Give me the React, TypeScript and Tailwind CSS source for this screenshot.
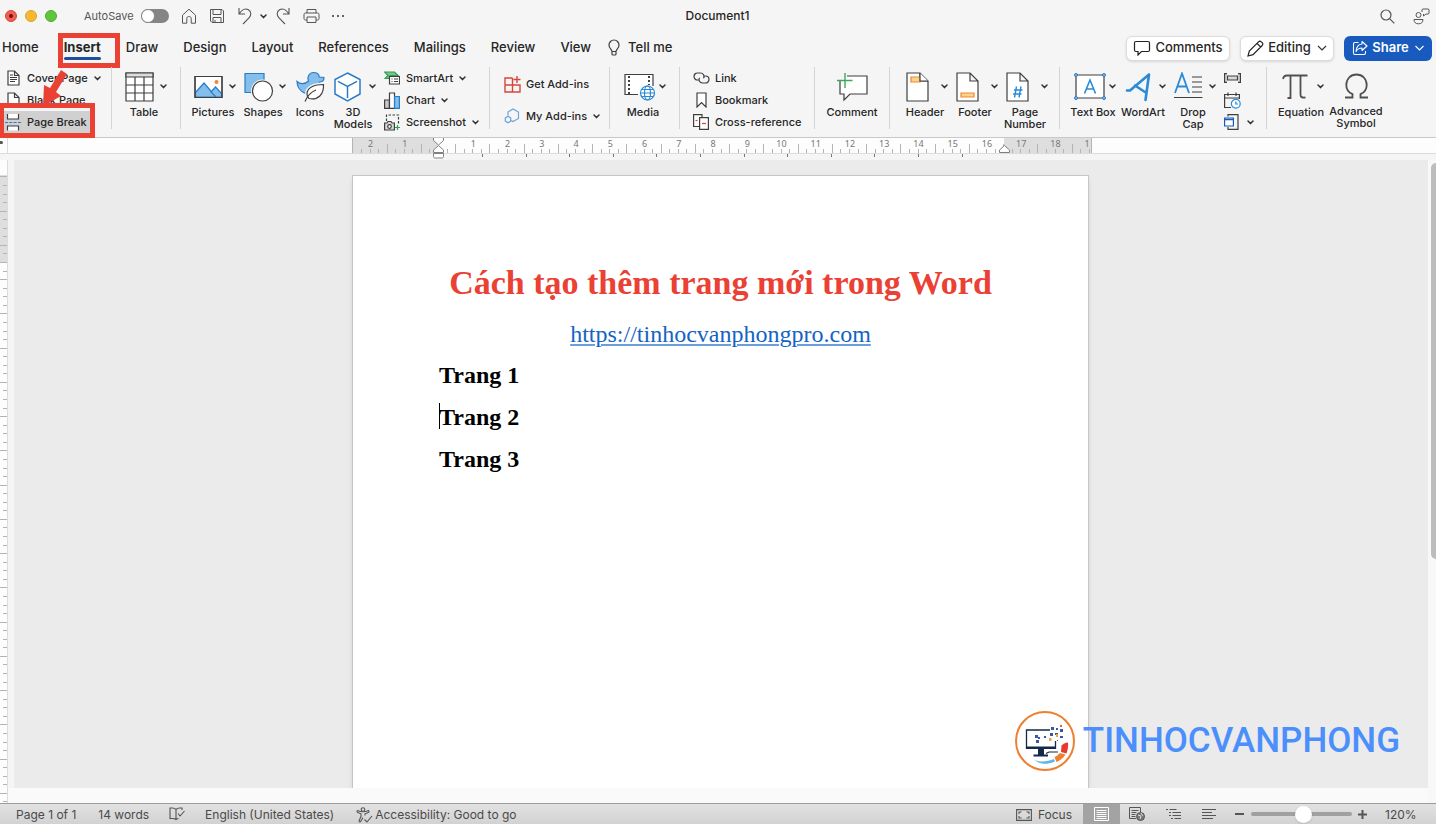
import { useState } from "react";
import type { ReactNode } from "react";

const CM = 34.25;

const Chevron = ({ className = "text-[#333]" }: { className?: string }) => (
  <svg width="7" height="5" viewBox="0 0 7 5" fill="none" stroke="currentColor" strokeWidth="1.5" strokeLinecap="round" strokeLinejoin="round" className={`shrink-0 ${className}`}>
    <path d="M1 1l2.5 2.6L6 1" />
  </svg>
);

type IconProps = { w: number; h: number; children: ReactNode };

const Icon = ({ w, h, children }: IconProps) => (
  <svg width={w} height={h} viewBox={`0 0 ${w} ${h}`} fill="none" stroke="#3f3f3f" strokeWidth="1.2" className="shrink-0">
    {children}
  </svg>
);

type ButtonProps = {
  icon: ReactNode;
  label: string;
  menu?: boolean;
  className?: string;
};

const BigButton = ({ icon, label, menu, className = "w-[42px]" }: ButtonProps) => (
  <button className={`flex shrink-0 flex-col items-center ${className}`}>
    <span className={`flex h-[39px] w-full items-center ${menu ? "justify-between" : "justify-center"}`}>
      {icon}
      {menu && <Chevron />}
    </span>
    <span className={`flex flex-col whitespace-pre text-center text-[11px] font-medium leading-3 ${menu ? "pr-1" : ""}`}>
      {label}
    </span>
  </button>
);

const SmallButton = ({ icon, label, menu, className = "h-[22px]" }: ButtonProps) => (
  <button className={`flex items-center gap-1.5 whitespace-nowrap text-[11px] font-medium ${className}`}>
    <span className="flex w-4 shrink-0 items-center justify-center">{icon}</span>
    <span>{label}</span>
    {menu && <Chevron />}
  </button>
);

const Group = ({ className, children }: { className: string; children: ReactNode }) => (
  <div className={`flex h-[62px] shrink-0 items-start border-r border-[#d4d4d4] ${className}`}>{children}</div>
);

const TitleBar = () => {
  const [autoSave, setAutoSave] = useState<boolean>(false);

  return (
    <header className="flex h-8 items-center pl-[5px] pr-1.5">
      <div className="flex flex-1 items-center">
        <div className="flex gap-2">
          <button aria-label="Close" className="flex size-3 items-center justify-center rounded-full border border-[#d9453c] bg-[#ed5f55]">
            <span className="size-1 rounded-full bg-[#7c0f0a]" />
          </button>
          <button aria-label="Minimize" className="size-3 rounded-full border border-[#e0a22a] bg-[#f6b931]" />
          <button aria-label="Zoom" className="size-3 rounded-full border border-[#4fae31] bg-[#5dc63c]" />
        </div>
        <label className="ml-[27px] flex items-center gap-[7px] text-[11px] text-[#555]">
          <span>AutoSave</span>
          <input
            type="checkbox"
            checked={autoSave}
            onChange={() => setAutoSave(!autoSave)}
            className="h-3.5 w-7 appearance-none rounded-full bg-[#858585] before:block before:size-3.5 before:rounded-full before:border before:border-[#858585] before:bg-white checked:before:ml-3.5"
          />
        </label>
        <div className="ml-3 flex items-center">
          <button aria-label="Home">
            <Icon w={16} h={16}>
              <path d="M1.500 7.200L8 1.200l6.500 6v8h-4.300V10.300c0-1-.8-1.700-1.700-1.700h-1c-1 0-1.700.7-1.700 1.700v4.900H1.500z" stroke="#555" strokeWidth="1" strokeLinejoin="round" />
            </Icon>
          </button>
          <button aria-label="Save" className="ml-3">
            <Icon w={16} h={16}>
              <path d="M1.500 1.500h11.500l1.500 1.500v11.500H3l-1.500-1.500zM4 1.500v5h8v-5M4 14.500V9.500h8v5M6 14.500v-2.500" stroke="#555" strokeWidth="1" />
            </Icon>
          </button>
          <button aria-label="Undo" className="ml-3">
            <Icon w={16} h={18}>
              <path d="M2 1v6h6M2.300 6.700C4.500 3 8 1 11 2.600c3.500 2 3.600 5.500 1 8.200L6 17" stroke="#555" strokeWidth="1.100" />
            </Icon>
          </button>
          <button aria-label="Undo history" className="ml-[7px]">
            <Chevron />
          </button>
          <button aria-label="Redo" className="ml-2">
            <Icon w={16} h={18}>
              <path d="M14 1v6H8M13.700 6.700C11.500 3 8 1 5 2.600c-3.500 2-3.600 5.500-1 8.200L10 17" stroke="#555" strokeWidth="1.100" />
            </Icon>
          </button>
          <button aria-label="Print" className="ml-3">
            <Icon w={17} h={16}>
              <path d="M4 5V1.500h9V5M4 12H2.500C1.500 12 1 11.500 1 10.500v-4C1 5.500 1.500 5 2.500 5h12c1 0 1.500.5 1.500 1.500v4c0 1-.5 1.500-1.500 1.500H13M4 9h9v5.500H4z" stroke="#555" strokeWidth="1" />
            </Icon>
          </button>
          <button aria-label="More" className="ml-3 flex gap-[3px]">
            <span className="size-[2px] rounded-full bg-[#333]" />
            <span className="size-[2px] rounded-full bg-[#333]" />
            <span className="size-[2px] rounded-full bg-[#333]" />
          </button>
        </div>
      </div>
      <h1 className="text-xs font-medium">Document1</h1>
      <div className="flex flex-1 items-center justify-end gap-[18px]">
        <button aria-label="Search">
          <Icon w={15} h={15}>
            <circle cx="6" cy="6" r="5" stroke="#555" />
            <path d="M9.800 9.800l4.500 4.500" stroke="#555" />
          </Icon>
        </button>
        <button aria-label="Collaboration">
          <Icon w={17} h={17}>
            <circle cx="5.500" cy="7" r="2.500" stroke="#555" strokeWidth="1" />
            <path d="M1 11.500h9c0 3-1.700 4.300-4.500 4.300S1 14.500 1 11.500zM9 4V2c0-.6.400-1 1-1h5c.6 0 1 .4 1 1v3c0 .6-.4 1-1 1h-2l-2.500 2V6" stroke="#555" strokeWidth="1" />
          </Icon>
        </button>
      </div>
    </header>
  );
};

const tabs = ["Home", "Insert", "Draw", "Design", "Layout", "References", "Mailings", "Review", "View"];

const TabRow = () => (
  <div className="flex h-8 items-center justify-between pl-0.5 pr-1">
    <nav className="flex h-full items-start gap-[25px] pt-1.5 text-[13px] font-medium leading-[18px]">
      {tabs.map((tab) =>
        tab === "Insert" ? (
          <button key={tab} className="relative flex flex-col font-bold">
            <span>{tab}</span>
            <span className="mt-px h-[3px] w-full rounded-full bg-[#1f4e9e]" />
            <span className="pointer-events-none absolute -left-1.5 -top-[5px] h-[35px] w-[62px] border-[5px] border-[#eb4034]" />
          </button>
        ) : (
          <button key={tab}>{tab}</button>
        )
      )}
      <button className="-ml-2 flex items-center gap-2">
        <Icon w={12} h={17}>
          <path d="M4 12.500c0-2-3-3-3-6.300C1 3.300 3.200 1 6 1s5 2.300 5 5.200c0 3.300-3 4.300-3 6.300zM4 12.500V15c0 .6.400 1 1 1h2c.6 0 1-.4 1-1v-2.500" />
        </Icon>
        <span>Tell me</span>
      </button>
    </nav>
    <div className="flex items-center gap-2.5 text-[13px] font-medium">
      <button className="flex h-[25px] w-[104px] items-center justify-center gap-1 rounded-md border border-[#dcdcdc] bg-white shadow-sm">
        <Icon w={18} h={16}>
          <path d="M3 1.500h12c.8 0 1.500.7 1.500 1.500v7c0 .8-.7 1.500-1.500 1.500H8.500L5 15v-3.500H3c-.8 0-1.500-.7-1.500-1.500V3c0-.8.700-1.500 1.500-1.500z" stroke="#222" />
        </Icon>
        <span>Comments</span>
      </button>
      <button className="flex h-[25px] w-[94px] items-center justify-center gap-1 rounded-md border border-[#dcdcdc] bg-white shadow-sm">
        <Icon w={17} h={17}>
          <path d="M1 16l1.300-5L11.500 1.800c.8-.8 2-.8 2.800 0l.9.900c.8.800.8 2 0 2.800L6 14.700zM10 3.300L13.700 7" stroke="#222" />
        </Icon>
        <span>Editing</span>
        <svg width="10" height="6" viewBox="0 0 10 6" fill="none" stroke="#333" strokeWidth="1.200" className="ml-0.5">
          <path d="M1 1l4 4 4-4" />
        </svg>
      </button>
      <button className="flex h-[25px] w-[88px] items-center justify-center gap-1 rounded-md bg-[#185abd] font-semibold text-white">
        <svg width="16" height="16" viewBox="0 0 16 16" fill="none" stroke="#fff" strokeWidth="1.100">
          <path d="M6.500 2.500H3C2 2.500 1.500 3 1.500 4v9c0 1 .5 1.500 1.500 1.500h9c1 0 1.500-.5 1.500-1.500v-2M10 1.500l5 4.500-5 4.500V8C7 8 5.300 9 4 11.500 4.300 7 6.500 4.300 10 4z" strokeLinejoin="round" />
        </svg>
        <span>Share</span>
        <svg width="9" height="6" viewBox="0 0 9 6" fill="none" stroke="#fff" strokeWidth="1.100" className="ml-0.5">
          <path d="M.5 1l4 4 4-4" />
        </svg>
      </button>
    </div>
  </div>
);

const PageIcon = ({ children }: { children?: ReactNode }) => (
  <Icon w={23} h={30}>
    <path d="M1 1h13l8 8v20H1zM14 1v8h8" fill="#fff" />
    {children}
  </Icon>
);

const Ribbon = () => (
  <div className="relative flex h-[74px] border-b border-[#c8c8c8] pt-[3px]">
    <Group className="w-[112px] pl-1">
      <div className="flex w-[91px] flex-col">
        <SmallButton
          menu
          className="h-[22px] pl-px"
          label="Cover Page"
          icon={
            <Icon w={13} h={16}>
              <path d="M1 1h6.500L12 5.500V15H1zM7.500 1v4.500H12" fill="#fff" />
              <path d="M3 5h3M3 7.500h7M3 9.500h7M3 11.500h5" strokeWidth="1" />
            </Icon>
          }
        />
        <SmallButton
          className="h-[22px] pl-px"
          label="Blank Page"
          icon={
            <Icon w={13} h={16}>
              <path d="M1 1h6.500L12 5.500V15H1zM7.500 1v4.500H12" fill="#fff" />
            </Icon>
          }
        />
        <SmallButton
          className="h-[22px] w-[86px] bg-[#d0d0d0] pl-px"
          label="Page Break"
          icon={
            <Icon w={16} h={18}>
              <path d="M2.500 1v5h11V1M2.500 17.500V13h11v4.500" fill="#fff" />
              <path d="M0 9.500h16" stroke="#2b7cc7" strokeDasharray="3 1.300" />
            </Icon>
          }
        />
      </div>
    </Group>

    <Group className="w-[69px] pl-[13px]">
      <BigButton
        menu
        label="Table"
        icon={
          <Icon w={29} h={30}>
            <path d="M1 1h27v28H1z" fill="#fff" />
            <path d="M1 1h27v4H1z" fill="#ddd" />
            <path d="M1 13h27M1 21h27M10 5v24M19 5v24" />
          </Icon>
        }
      />
    </Group>

    <Group className="w-[309px] gap-2 pl-[13px]">
      <BigButton
        menu
        label="Pictures"
        icon={
          <Icon w={29} h={24}>
            <path d="M1 1.500h27v21H1z" fill="#fff" />
            <path d="M1.500 17.500L10 8l12 14H1.500z" fill="#83beec" stroke="#2b7cc7" />
            <path d="M17 17l4.500-5 6 6.500v3.500H22z" fill="#83beec" stroke="#2b7cc7" />
            <circle cx="22.500" cy="7" r="2" fill="#ef8733" stroke="none" />
            <path d="M1 1.500h27v21H1z" />
          </Icon>
        }
      />
      <BigButton
        menu
        label="Shapes"
        icon={
          <Icon w={30} h={30}>
            <path d="M1 1.500h19v19H1z" fill="#83beec" stroke="#2b7cc7" />
            <circle cx="18.500" cy="19" r="11.500" fill="#f5f5f5" stroke="none" />
            <circle cx="18.500" cy="19" r="10" fill="#fff" />
          </Icon>
        }
      />
      <BigButton
        label="Icons"
        className="w-8"
        icon={
          <Icon w={29} h={31}>
            <path d="M12.500 10c-2-4 1-8.500 5-8.500 3.400 0 5.500 2 5.800 4.500l4.700.5c0 3-2 4.500-4.500 4.500 3 7-1 12-8 12-8 0-14-4-14.500-12.500 3 3 8 3 11.500-.5z" fill="#83beec" stroke="#2b7cc7" />
            <path d="M27.500 13.500c-9 0-16.500 3-16.500 9.500 0 2 .8 3.500 2 4.500 9 2 15-4 14.500-14z" fill="#fff" stroke="#f5f5f5" strokeWidth="4" />
            <path d="M27.500 13.500c-9 0-16.500 3-16.500 9.500 0 2 .8 3.500 2 4.500 9 2 15-4 14.500-14z" fill="#fff" />
            <path d="M9 30.500c2-5 6-9.500 11-11.500" />
          </Icon>
        }
      />
      <BigButton
        menu
        label={"3D\nModels"}
        icon={
          <Icon w={27} h={30}>
            <path d="M13.500 1L26 7.500v14.500L13.500 29 1 22V7.500z" fill="#fff" stroke="#2b7cc7" strokeWidth="1.500" />
            <path d="M4 9.300l9.500 5 9.500-5M13.500 14.300V26" stroke="#2b7cc7" strokeWidth="1.500" />
          </Icon>
        }
      />
      <div className="flex flex-col">
        <SmallButton
          menu
          label="SmartArt"
          icon={
            <Icon w={16} h={14}>
              <path d="M.5 1h10l3.500 3.500H6v3H1L4 4.500z" fill="#7cc48c" stroke="#2f9e4e" />
              <path d="M5.500 5.500h10v7.500h-10z" fill="#fff" />
              <path d="M7.500 8h1M10 8h4M7.500 10.500h1M10 10.500h4" />
            </Icon>
          }
        />
        <SmallButton
          menu
          label="Chart"
          icon={
            <Icon w={16} h={17}>
              <path d="M.600 8h4.800v8.400H.600z" fill="#c8c8c8" />
              <path d="M5.500 1h5v15.400h-5z" fill="#fff" />
              <path d="M10.600 4.500h4.800v11.900h-4.800z" fill="#83beec" stroke="#2b7cc7" />
            </Icon>
          }
        />
        <SmallButton
          menu
          label="Screenshot"
          icon={
            <Icon w={16} h={17}>
              <path d="M2.500 7V1h12v9" strokeDasharray="2.500 1.500" />
              <path d="M.6 9h2.400l1-1.500h3L8 9h2.400v7H.6z" fill="#d8d8d8" />
              <circle cx="5.500" cy="12.500" r="1.800" fill="#fff" />
              <path d="M13.500 11v5M11 13.500h5" stroke="#2f9e4e" />
            </Icon>
          }
        />
      </div>
    </Group>

    <Group className="w-[120px] pl-3.5">
      <div className="flex flex-col pt-px">
        <SmallButton
          className="h-8"
          label="Get Add-ins"
          icon={
            <Icon w={17} h={17}>
              <path d="M8.500 2H1v14h15V9H1M8.500 2v14M13 0v7M9.500 3.500h7" stroke="#d8463b" strokeWidth="1.400" />
            </Icon>
          }
        />
        <SmallButton
          menu
          className="h-8"
          label="My Add-ins"
          icon={
            <Icon w={16} h={16}>
              <path d="M4 7.500V4L9 1l5.500 3v6.500l-5.500 3-1.800-1" stroke="#6aa6dc" />
              <path d="M4 8.300l2.700 1.600v3.200L4 14.700l-2.700-1.600V9.900z" stroke="#6aa6dc" />
            </Icon>
          }
        />
      </div>
    </Group>

    <Group className="w-[70px] pl-3.5">
      <BigButton
        menu
        label="Media"
        icon={
          <Icon w={32} h={28}>
            <path d="M14 21.500H1v-20h28V13" fill="#fff" />
            <path d="M5 3v18M25 3v9" strokeWidth="2" strokeDasharray="2 2" />
            <circle cx="23.500" cy="20" r="8" fill="#f5f5f5" stroke="none" />
            <circle cx="23.500" cy="20" r="7" stroke="#2b8ad6" fill="#fff" />
            <ellipse cx="23.500" cy="20" rx="3" ry="7" stroke="#2b8ad6" />
            <path d="M16.500 20h14M17.500 16.500h12M17.500 23.500h12" stroke="#2b8ad6" />
          </Icon>
        }
      />
    </Group>

    <Group className="w-[135px] pl-[13px]">
      <div className="flex flex-col">
        <SmallButton
          label="Link"
          icon={
            <Icon w={17} h={12}>
              <path d="M6.500 8H4.500a3.500 3.500 0 010-7h3a3.500 3.500 0 013 5.300M10.500 4h2a3.500 3.500 0 010 7h-3a3.500 3.500 0 01-3-5.300" />
            </Icon>
          }
        />
        <SmallButton
          label="Bookmark"
          icon={
            <Icon w={11} h={16}>
              <path d="M1 1h9v14l-4.500-4.500L1 15z" fill="#fff" />
            </Icon>
          }
        />
        <SmallButton
          label="Cross-reference"
          icon={
            <Icon w={16} h={16}>
              <path d="M6 12.500H.6V.600H9V3" fill="#fff" />
              <path d="M2.500 6.500h2" stroke="#e03c31" />
              <path d="M6.600 3.600h8.800v11.800H6.600z" fill="#fff" />
              <path d="M9 9.500h4" stroke="#e03c31" />
            </Icon>
          }
        />
      </div>
    </Group>

    <Group className="w-[75px] justify-center">
      <BigButton
        label="Comment"
        className="w-12"
        icon={
          <Icon w={31} h={30}>
            <path d="M3 9v13h4v6l6-6h17V4H10" fill="#fff" />
            <path d="M8 1v15M0 8.500h15.500" stroke="#3fa75a" strokeWidth="1.400" />
          </Icon>
        }
      />
    </Group>

    <Group className="w-[170px] gap-2 pl-4">
      <BigButton
        menu
        label="Header"
        icon={
          <PageIcon>
            <path d="M5 5h9v5H5z" fill="#fbd48b" stroke="#ef8733" />
            <path d="M14 1v8h8" fill="#fff" />
          </PageIcon>
        }
      />
      <BigButton
        menu
        label="Footer"
        icon={
          <PageIcon>
            <path d="M5 21h13v4H5z" fill="#fbd48b" stroke="#ef8733" />
          </PageIcon>
        }
      />
      <BigButton
        menu
        label={"Page\nNumber"}
        icon={
          <PageIcon>
            <path d="M10.500 14.500l-2 11M15 14.500l-2 11M8 18h8.500M7 22h8.500" stroke="#2b8ad6" strokeWidth="1.400" />
          </PageIcon>
        }
      />
    </Group>

    <Group className="w-[207px] gap-2 pl-3.5">
      <BigButton
        menu
        label="Text Box"
        icon={
          <Icon w={32} h={27}>
            <path d="M2 2h28v23H2z" fill="#fff" />
            <path d="M10.500 20.500L16 7l5.500 13.500M12.500 16h7" stroke="#2b8ad6" strokeWidth="1.600" />
            <g fill="#83beec" stroke="#2b7cc7" strokeWidth="1">
              <circle cx="2" cy="2" r="1.500" />
              <circle cx="30" cy="2" r="1.500" />
              <circle cx="2" cy="25" r="1.500" />
              <circle cx="30" cy="25" r="1.500" />
            </g>
          </Icon>
        }
      />
      <BigButton
        menu
        label="WordArt"
        icon={
          <Icon w={28} h={30}>
            <path d="M3 18.500h3L25 2.500 21.500 28M11 13.500l11.500 7.500" stroke="#2b8ad6" strokeWidth="2.600" strokeLinejoin="round" strokeLinecap="round" />
          </Icon>
        }
      />
      <BigButton
        menu
        label={"Drop\nCap"}
        icon={
          <Icon w={29} h={30}>
            <path d="M1 21L8 1.500 15 21M3.500 14.500h9" stroke="#2b8ad6" strokeWidth="1.800" />
            <path d="M18 5h10M18 10h10M18 15h10M18 20h10M0 25.500h28.500" />
          </Icon>
        }
      />
      <div className="flex flex-col">
        <button aria-label="Field" className="flex h-[22px] items-center">
          <Icon w={17} h={10}>
            <path d="M3 .6H.6v8.800H3M14 .6h2.400v8.800H14M3.500 3h10v4h-10z" fill="#d8d8d8" />
          </Icon>
        </button>
        <button aria-label="Date and time" className="flex h-[22px] items-center">
          <Icon w={17} h={17}>
            <path d="M7 15.500H.6v-13h14.800V7M.6 6h14.800M4 .5v3.500M12 .5v3.500" />
            <circle cx="11.800" cy="11.800" r="4.400" fill="#fff" stroke="#2b8ad6" />
            <path d="M11.800 9.500v2.500H14" stroke="#2b8ad6" />
          </Icon>
        </button>
        <button aria-label="Object" className="flex h-[22px] items-center gap-2">
          <Icon w={15} h={16}>
            <path d="M4 2.500V.6h10v14.800H4V13" />
            <path d="M.6 4h8.800v8H.6z" fill="#fff" stroke="#185abd" />
            <path d="M.6 5.500h8.800" stroke="#185abd" strokeWidth="1.500" />
          </Icon>
          <Chevron />
        </button>
      </div>
    </Group>

    <div className="flex h-[62px] gap-2 pl-[15px]">
      <BigButton
        menu
        label="Equation"
        icon={
          <Icon w={27} h={26}>
            <path d="M1 5c.5-2.500 1.500-3.500 4-3.500h20.500M8.500 1.500V24H5.500M18.500 1.500v19c0 2.500 1.500 3.500 5 3" stroke="#505050" strokeWidth="1.800" />
          </Icon>
        }
      />
      <BigButton
        label={"Advanced\nSymbol"}
        className="w-12"
        icon={
          <Icon w={25} h={26}>
            <path d="M1 24.500h7.500v-3.300C4.500 19.500 2.300 16 2.300 12 2.300 6 6.500 1.500 12.500 1.500S22.700 6 22.700 12c0 4-2.200 7.500-6.200 9.200v3.300H24" stroke="#505050" strokeWidth="1.800" />
          </Icon>
        }
      />
    </div>

    {/* red callouts over the page break command */}
    <span className="pointer-events-none absolute -left-px top-[39px] h-[35px] w-24 border-[5px] border-[#eb4034]" />
    <svg width="26" height="38" viewBox="0 0 26 38" className="pointer-events-none absolute left-[43px] top-1.5">
      <path d="M18 0l6 4-11 18 5 4L0 36l1-21 6 3z" fill="#eb4034" />
    </svg>
  </div>
);

const quarters = Array.from({ length: 87 }, (_, i) => i - 10);
const tabStops = Array.from({ length: 12 }, (_, i) => 130 + i * 43.6);
const rulerLabels = Array.from({ length: 21 }, (_, i) => i - 2).filter((n) => n !== 0);

const HorizontalRuler = () => (
  <div className="flex h-[22px] shrink-0">
    <div className="flex h-4 w-2 items-start border-b border-r border-[#dcdcdc] bg-[#fdfdfd] pt-[3px]">
      <span className="size-[3px] rounded-r-full bg-[#555]" />
    </div>
    <div className="flex h-4 flex-1 justify-center border-b border-[#dcdcdc] bg-[#fdfdfd]">
      <svg width="740" height="22" viewBox="0 0 740 22" className="shrink-0">
        <path d="M0 0h86v15H0zM652 0h88v15h-88z" fill="#dedede" />
        <path d="M.5 0v15M739.500 0v15" stroke="#b4b4b4" />
        {quarters.map((q) => {
          const x = Math.round(86 + (q * CM) / 4) + 0.5;
          const long = Math.abs(q % 4) === 2;
          return <path key={q} d={`M${x} ${long ? 6 : 11}V15`} stroke="#b4b4b4" />;
        })}
        {tabStops.map((x) => (
          <path key={x} d={`M${Math.round(x) + 0.5} 16v3`} stroke="#777" />
        ))}
        <g fill="#777" fontSize="9" fontFamily="Noto Sans, sans-serif" textAnchor="middle">
          {rulerLabels.map((n) => (
            <text key={n} x={86 + n * CM + 1} y="9">
              {Math.abs(n)}
            </text>
          ))}
          <text x="735" y="9">1</text>
        </g>
        <g fill="#fff" stroke="#808080">
          <path d="M81.500 0v2.500l5 4.500 5-4.500V0" />
          <path d="M81.500 14.500V12l5-4.500 5 4.500v2.500zM81.500 15.500h10v3c0 1-.5 1.500-1.500 1.500h-7c-1 0-1.500-.5-1.500-1.500z" />
          <path d="M647.500 14.500V12l5-4.500 5 4.500v2.500z" />
        </g>
      </svg>
    </div>
  </div>
);

const VerticalRuler = () => (
  <div className="h-full w-2 overflow-hidden border-r border-[#dcdcdc] bg-[#fdfdfd]">
    <svg width="7" height="1400" viewBox="0 0 7 1400">
      <path d="M0 15h7v88H0z" fill="#dedede" />
      <path d="M0 102.500h7" stroke="#b4b4b4" />
      {Array.from({ length: 150 }, (_, i) => i - 10).map((q) => {
        const y = Math.round(102 + (q * CM) / 4) + 0.5;
        const long = Math.abs(q % 4) === 2;
        return <path key={q} d={`M${long ? 0 : 3} ${y}H7`} stroke="#b4b4b4" />;
      })}
    </svg>
  </div>
);

const Watermark = () => (
  <div className="pointer-events-none absolute bottom-8 right-7 flex items-center gap-2">
    <svg width="60" height="60" viewBox="0 0 60 60" fill="none">
      <circle cx="30" cy="30" r="29" fill="#fff" stroke="#ee7f2d" strokeWidth="2" />
      <path d="M35 19H11.500v18h29V30" stroke="#14284a" strokeWidth="1.300" />
      <path d="M11 35.500h30V38H11zM23 38h6v5.500h4v2H18.500v-2H23z" fill="#14284a" />
      <path d="M31 42.500l3-1.500h9" stroke="#14284a" strokeWidth="1.200" />
      <path d="M46.500 34.500c1.500-1.500 3.500-3 6.500-3 .5 4-.5 8-1.500 11l-5.500-1.500z" fill="#e53b2e" />
      <path d="M45 42l5.500 1.500c-2 3.500-5.500 6-9 7.500L39.500 46c2.500-1 4-2.500 5.500-4z" fill="#ee7f2d" />
      <path d="M19 48.500c6 3 13 2.500 20-.5l1 2.500c-8 3.500-15.500 3-21-2z" fill="#5bb6ea" />
      <g fill="#3a56a8">
        <path d="M20 24h3v3h-3zM23 26h2v2h-2zM21 29h3v3h-3zM29 25h2v2h-2zM36 16h3v3h-3zM41 17h2v2h-2zM45 18h3v3h-3zM40 22h3v2h-3zM35 22h3v3h-3zM45 25h3v2h-3zM42 29h1v1h-1z" />
      </g>
      <path d="M34 27h2.500v3H34zM41 23h2v3h-2z" fill="#f0a83a" />
      <path d="M45 14h2v2h-2z" fill="#e0603a" />
    </svg>
    <span className="font-[Roboto,sans-serif] text-[35px] font-medium leading-10 text-[#4b8ffc]">TINHOCVANPHONG</span>
  </div>
);

const Workspace = () => (
  <main className="flex min-h-0 flex-1">
    <VerticalRuler />
    <div className="relative flex min-w-0 flex-1 flex-col bg-[#fafafa] pb-[15px]">
      <div className="flex min-h-0 flex-1 justify-center overflow-hidden border-l-6 border-[#f5f5f5] bg-[#ebebeb] pr-px pt-[15px]">
        <article className="h-full w-[737px] shrink-0 border border-b-0 border-[#c6c6c6] bg-white px-[86px] pt-[87px] font-['Liberation_Serif',serif] text-black shadow-md">
          <h2 className="whitespace-nowrap text-center text-[34px] font-bold leading-10 text-[#eb4034]">
            Cách tạo thêm trang mới trong Word
          </h2>
          <p className="mt-2.5 text-center text-2xl leading-[42px]">
            <a href="https://tinhocvanphongpro.com" className="text-[#1463c4] underline decoration-[#6a9fdd] decoration-2 underline-offset-2">
              https://tinhocvanphongpro.com
            </a>
          </p>
          <div className="-mt-px text-2xl font-bold leading-[42px]">
            <p>Trang 1</p>
            <p className="relative">
              <span className="absolute left-0 top-[7px] h-[26px] w-px bg-black" />
              Trang 2
            </p>
            <p>Trang 3</p>
          </div>
        </article>
      </div>
      <Watermark />
    </div>
    <div className="flex w-2 justify-end bg-[#f8f8f8] pt-[3px]">
      <div className="h-[396px] w-[5px] rounded-l-full bg-[#bdbdbd]" />
    </div>
  </main>
);

const StatusBar = () => {
  const [zoom, setZoom] = useState<number>(52);

  return (
    <footer className="flex h-[21px] shrink-0 items-center border-t border-[#9c9c9c] bg-linear-to-b from-[#e2e2e2] to-[#d2d2d2] pl-4 text-xs text-[#4a4a4a]">
      <button className="pt-px">Page 1 of 1</button>
      <button className="ml-[22px] pt-px">14 words</button>
      <button aria-label="Proofing" className="ml-5">
        <svg width="16" height="14" viewBox="0 0 16 14" fill="none" stroke="#555" strokeWidth="1.100">
          <path d="M7 12.500V2.500C6 1.500 5 1 3.500 1H1v10.500h2.500c1.500 0 2.500.3 3.500 1 .8-.6 1.500-.9 2.500-1M7 2.500C8 1.500 9 1 10.500 1H13v2M9 6.500l2 2.500 4.500-5" />
        </svg>
      </button>
      <button className="ml-5 pt-px">English (United States)</button>
      <button className="ml-[22px] flex items-center gap-0.5 pt-px">
        <svg width="17" height="16" viewBox="0 0 17 16" fill="none" stroke="#555" strokeWidth="1.100">
          <circle cx="7" cy="2.500" r="1.800" />
          <path d="M1.500 3.500c-.8.800-.5 1.700.3 2L5 6.800v2.500L3 14c0 1 1.300 1.300 1.700.5L7 10.500M9 8.500V6.800l3.300-1.300c.8-.3 1-1.200.3-2-1.600.7-3 1.300-5.600 1.300S3 4.200 1.500 3.500M8.500 12.500l2.500 2.500 5-6" />
        </svg>
        <span>Accessibility: Good to go</span>
      </button>
      <div className="ml-auto flex h-full items-center">
        <button className="flex items-center gap-1.5 pt-px">
          <svg width="16" height="12" viewBox="0 0 16 12" fill="none" stroke="#555" strokeWidth="1.100">
            <path d="M.6.6h14.800v10.800H.6zM3 5V3h2.500M10.500 3H13v2M13 7v2h-2.500M5.500 9H3V7" />
          </svg>
          <span>Focus</span>
        </button>
        <button aria-label="Print Layout" className="ml-[11px] flex h-full w-[37px] items-center justify-center bg-[#a3a3a3]">
          <svg width="15" height="14" viewBox="0 0 15 14" fill="none" stroke="#fff">
            <path d="M.5.5h14v13H.5zM2.500 3.500h10M2.500 5.500h10M2.500 7.500h10M2.500 9.500h10M2.500 11.500h10" />
          </svg>
        </button>
        <button aria-label="Web Layout" className="ml-[9px]">
          <svg width="16" height="14" viewBox="0 0 16 14" fill="none" stroke="#555">
            <path d="M7 11.500H.5V.5h11V5M2.500 3.500h7M2.500 5.500h5M2.500 7.500h4M2.500 9.500h4" />
            <circle cx="11.500" cy="9.500" r="4" fill="#777" />
            <path d="M9 8l3 1-1 3M12 6l2 3" stroke="#ddd" />
          </svg>
        </button>
        <button aria-label="Outline" className="ml-[21px]">
          <svg width="15" height="12" viewBox="0 0 15 12" stroke="#555">
            <path d="M0 1.500h2M3.500 1.500h7M3 4.500h2M6.500 4.500H15M3 7.500h2M6.500 7.500H15M5 10.500h2M8.500 10.500H15" />
          </svg>
        </button>
        <button aria-label="Draft" className="ml-[21px]">
          <svg width="15" height="12" viewBox="0 0 15 12" stroke="#555">
            <path d="M0 1.500h14M0 4.500h10M0 7.500h14M0 10.500h11" />
          </svg>
        </button>
        <button aria-label="Zoom out" className="ml-[18px] h-0.5 w-[9px] bg-[#555]" />
        <input
          type="range"
          aria-label="Zoom"
          value={zoom}
          onChange={(e) => setZoom(Number(e.target.value))}
          className="ml-[7px] h-1 w-[101px] appearance-none rounded-full bg-[#a0a0a0] [&::-webkit-slider-thumb]:size-[17px] [&::-webkit-slider-thumb]:appearance-none [&::-webkit-slider-thumb]:rounded-full [&::-webkit-slider-thumb]:bg-white [&::-webkit-slider-thumb]:shadow"
        />
        <button aria-label="Zoom in" className="ml-1.5">
          <svg width="9" height="9" viewBox="0 0 9 9" stroke="#555" strokeWidth="2">
            <path d="M0 4.500h9M4.500 0v9" />
          </svg>
        </button>
        <span className="ml-[18px] w-[51px] pt-px">120%</span>
      </div>
    </footer>
  );
};

const App = () => (
  <div className="flex h-screen flex-col overflow-hidden bg-[#f5f5f5] font-[Inter,sans-serif] text-[#262626]">
    <TitleBar />
    <TabRow />
    <Ribbon />
    <HorizontalRuler />
    <Workspace />
    <StatusBar />
  </div>
);

export default App;
